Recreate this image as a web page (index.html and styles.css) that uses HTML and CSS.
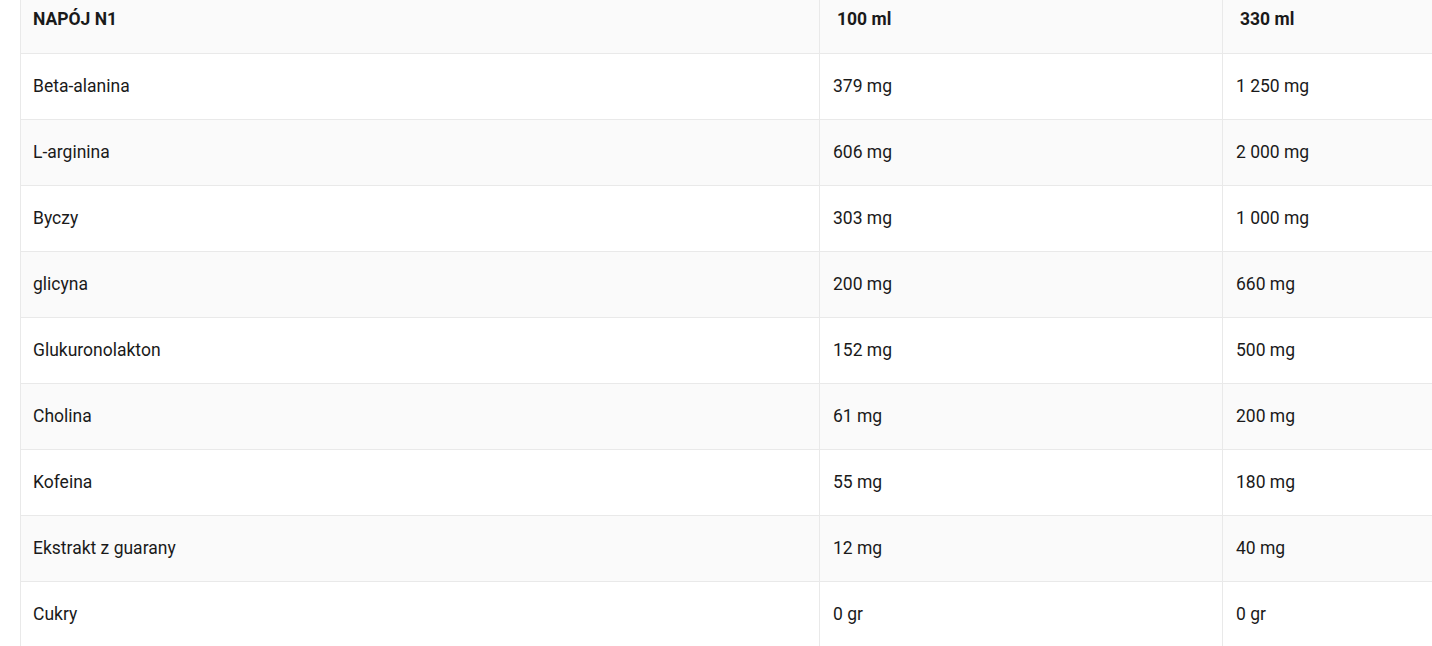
FILE: index.html
```html
<!DOCTYPE html>
<html lang="pl">
<head>
<meta charset="utf-8">
<link rel="stylesheet" href="styles.css">
</head>
<body>
<div class="wrap">
<table class="nutri">
<thead>
<tr><th class="c1">NAPÓJ N1</th><th class="c2">100 ml</th><th class="c3">330 ml</th></tr>
</thead>
<tbody>
<tr><td>Beta-alanina</td><td>379 mg</td><td>1 250 mg</td></tr>
<tr><td>L-arginina</td><td>606 mg</td><td>2 000 mg</td></tr>
<tr><td>Byczy</td><td>303 mg</td><td>1 000 mg</td></tr>
<tr><td>glicyna</td><td>200 mg</td><td>660 mg</td></tr>
<tr><td>Glukuronolakton</td><td>152 mg</td><td>500 mg</td></tr>
<tr><td>Cholina</td><td>61 mg</td><td>200 mg</td></tr>
<tr><td>Kofeina</td><td>55 mg</td><td>180 mg</td></tr>
<tr><td>Ekstrakt z guarany</td><td>12 mg</td><td>40 mg</td></tr>
<tr><td>Cukry</td><td>0 gr</td><td>0 gr</td></tr>
</tbody>
</table>
</div>
</body>
</html>
```
FILE: styles.css
```css
html, body {
  margin: 0;
  padding: 0;
  background: #fff;
  overflow: hidden;
  width: 1432px;
  height: 646px;
}
.wrap {
  padding-left: 20px;
  margin-top: -13px;
}
.nutri {
  border-collapse: collapse;
  font-family: Roboto, "Liberation Sans", sans-serif;
  color: #1a1a1a;
  table-layout: fixed;
  width: 1604px;
}
.nutri th, .nutri td {
  height: 66px;
  box-sizing: border-box;
  padding: 0 12px 2px;
  border: 1px solid #e9e9e9;
  text-align: left;
  vertical-align: middle;
  font-size: 17.5px;
  font-weight: 400;
}
.nutri td + td { padding-left: 13px; }
.nutri th {
  font-weight: 700;
  font-size: 17.5px;
  background: #fafafa;
  padding-bottom: 4px;
}
.nutri th.c1 { width: 799px; }
.nutri th.c2 { width: 403px; padding-left: 17px; }
.nutri th.c3 { padding-left: 17px; }
.nutri tbody tr:nth-child(even) td { background: #fafafa; }
```
